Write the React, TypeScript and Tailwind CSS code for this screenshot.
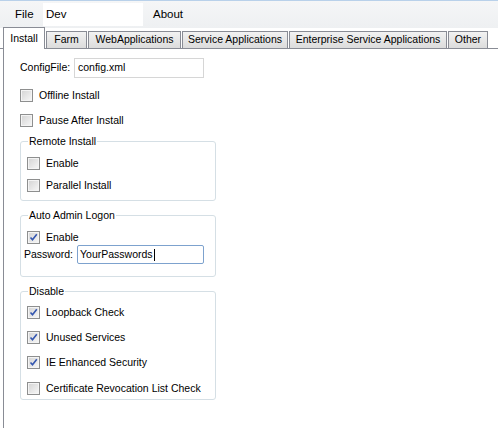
import type { ReactNode } from "react";

function Check({ checked, label }: { checked?: boolean; label: string }) {
  return (
    <div className="flex h-[13px] items-center">
      <span className="relative flex h-[13px] w-[13px] shrink-0 items-center justify-center border border-[#8e8f8f] bg-gradient-to-br from-[#d3d3d3] to-[#f8f8f8] shadow-[inset_0_0_0_1px_#f4f4f4]">
        {checked ? (
          <svg width="9" height="9" viewBox="0 0 9 9" className="absolute left-[1px] top-[1px]">
            <path d="M1.5 4.5 L3.5 6.8 L7.8 1.2" fill="none" stroke="#3557b0" strokeWidth="1.6" />
          </svg>
        ) : null}
      </span>
      <span className="ml-[6px]">{label}</span>
    </div>
  );
}

function Group({ title, className, children }: { title: string; className?: string; children: ReactNode }) {
  return (
    <div className={`relative w-[196px] rounded-[3px] border border-[#d5dfe5] ${className ?? ""}`}>
      <span className="absolute -top-[8px] left-[7px] bg-white px-[1px] leading-[14px]">{title}</span>
      {children}
    </div>
  );
}

const tabs = [
  { label: "Farm", w: "w-[41px]" },
  { label: "WebApplications", w: "w-[93px]" },
  { label: "Service Applications", w: "w-[106px]" },
  { label: "Enterprise Service Applications", w: "w-[158px]" },
  { label: "Other", w: "w-[40px]" },
];

export default function App() {
  return (
    <div className="h-[428px] w-[498px] overflow-hidden bg-white font-['Liberation_Sans',Arial,sans-serif] text-[10.5px] text-black">
      <div className="flex h-[28px] items-center border-t border-[#b9d1ea] bg-gradient-to-b from-[#f5f6f7] to-[#eef0f2] text-[11.5px]">
        <span className="ml-[15px] w-[28px]">File</span>
        <div className="flex h-[23px] w-[100px] items-center bg-white px-[3px]">Dev</div>
        <span className="ml-[10px]">About</span>
      </div>

      <div className="flex h-[21px] items-end border-b border-[#898c95] pl-[3px]">
        <div className="-mb-px flex h-[22px] w-[42px] items-start justify-center border border-b-0 border-[#898c95] bg-white pt-[3px]">
          Install
        </div>
        {tabs.map((t) => (
          <div
            key={t.label}
            className={`${t.w} ml-px flex h-[17px] items-center justify-center border border-b-0 border-[#898c95] bg-gradient-to-b from-[#f2f2f2] to-[#dcdcdc]`}
          >
            {t.label}
          </div>
        ))}
      </div>

      <div className="ml-[3px] h-full border-l border-[#898c95] pl-[16px] pt-[9px]">
        <div className="flex items-center">
          <span className="w-[54px]">ConfigFile:</span>
          <div className="flex h-[20px] w-[130px] items-center border border-[#d6d6d6] px-[3px]">config.xml</div>
        </div>

        <div className="mt-[11px]">
          <Check label="Offline Install" />
        </div>
        <div className="mt-[12px]">
          <Check label="Pause After Install" />
        </div>

        <Group title="Remote Install" className="mt-[14px] pb-[8px] pl-[6px] pt-[15px]">
          <Check label="Enable" />
          <div className="mt-[9px]">
            <Check label="Parallel Install" />
          </div>
        </Group>

        <Group title="Auto Admin Logon" className="mt-[14px] pb-[12px] pt-[15px]">
          <div className="pl-[6px]">
            <Check checked label="Enable" />
          </div>
          <div className="mt-[1px] flex items-center pl-[3px]">
            <span className="w-[53px]">Password:</span>
            <div className="flex h-[19px] w-[127px] items-center rounded-[2px] border border-[#7da2ce] px-[2px]">
              YourPasswords<span className="ml-px inline-block h-[12px] w-px bg-black" />
            </div>
          </div>
        </Group>

        <Group title="Disable" className="mt-[14px] pb-[4px] pl-[6px] pt-[14px]">
          <Check checked label="Loopback Check" />
          <div className="mt-[12px]">
            <Check checked label="Unused Services" />
          </div>
          <div className="mt-[12px]">
            <Check checked label="IE Enhanced Security" />
          </div>
          <div className="mt-[13px]">
            <Check label="Certificate Revocation List Check" />
          </div>
        </Group>
      </div>
    </div>
  );
}
